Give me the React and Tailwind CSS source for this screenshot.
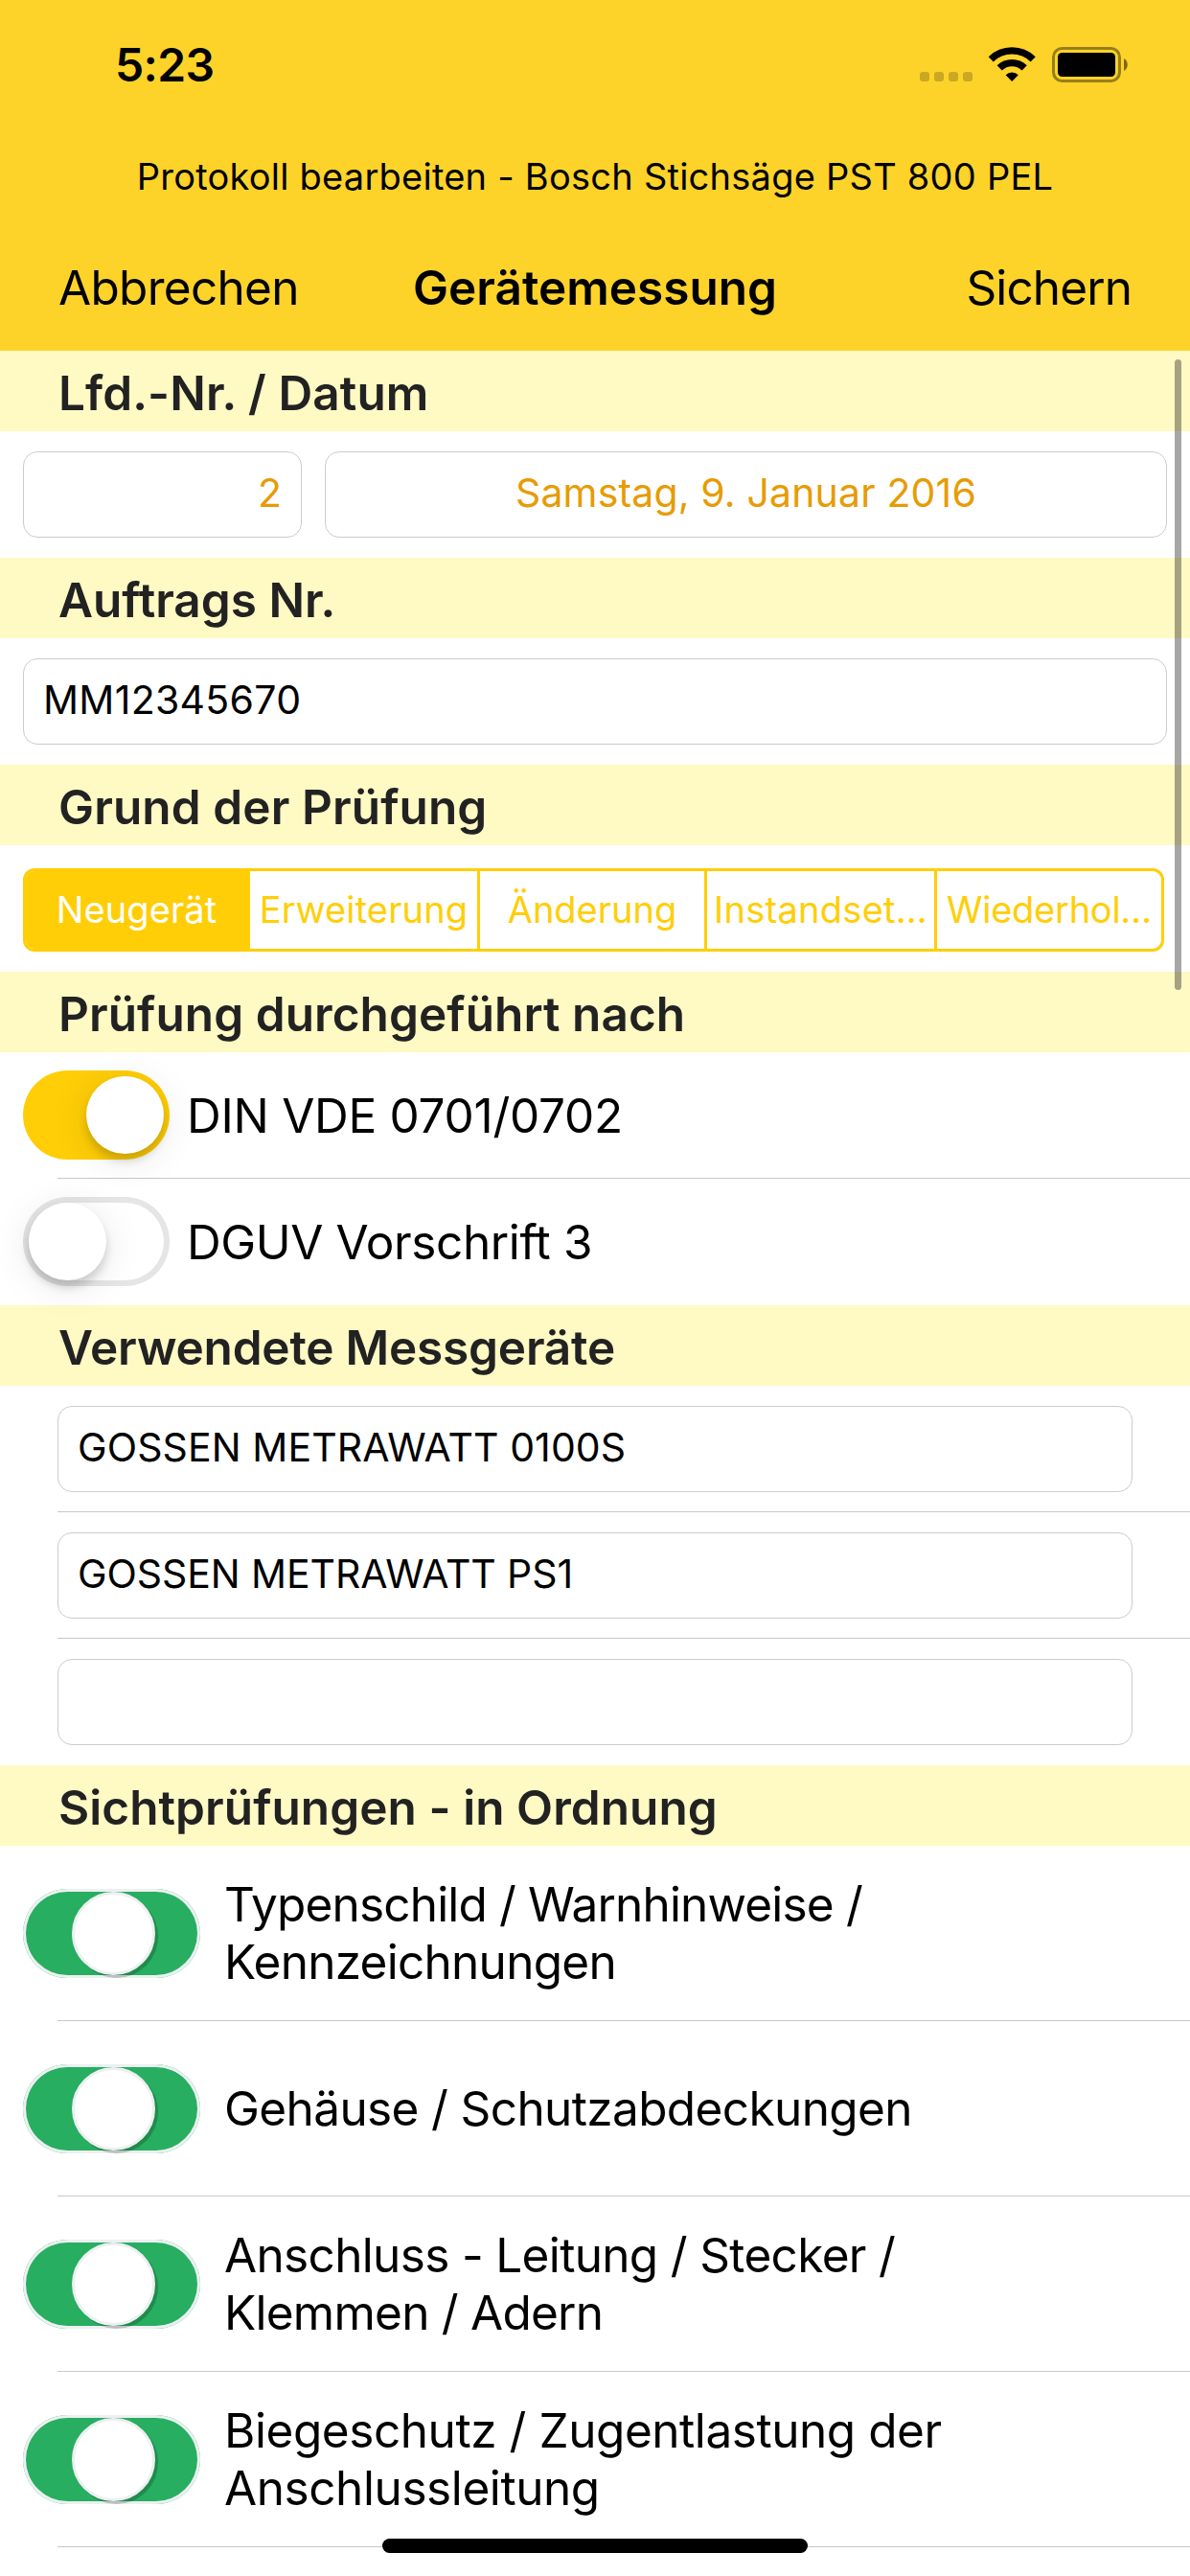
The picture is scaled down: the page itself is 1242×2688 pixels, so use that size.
import React from 'react';

const fields = [
  { text: 'GOSSEN METRAWATT 0100S', tracking: 'tracking-[0.1px]' },
  { text: 'GOSSEN METRAWATT PS1', tracking: 'tracking-[-0.08px]' },
  { text: '', tracking: '' },
];

const segments = [
  { text: 'Neugerät', tracking: 'tracking-[0.1px]' },
  { text: 'Erweiterung', tracking: 'tracking-[0.15px]' },
  { text: 'Änderung', tracking: '' },
  { text: 'Instandset…', tracking: 'tracking-[0.27px]' },
  { text: 'Wiederhol…', tracking: 'tracking-[-0.25px]' },
];

const norms = [
  { text: 'DIN VDE 0701/0702', on: true, tracking: 'tracking-[-0.27px]' },
  { text: 'DGUV Vorschrift 3', on: false, tracking: 'tracking-[-0.4px]' },
];

const checks = [
  [
    { text: 'Typenschild / Warnhinweise /', tracking: 'tracking-[-0.83px]' },
    { text: 'Kennzeichnungen', tracking: 'tracking-[-0.73px]' },
  ],
  [{ text: 'Gehäuse / Schutzabdeckungen', tracking: 'tracking-[-0.62px]' }],
  [
    { text: 'Anschluss - Leitung / Stecker /', tracking: 'tracking-[-0.66px]' },
    { text: 'Klemmen / Adern', tracking: 'tracking-[-0.76px]' },
  ],
  [
    { text: 'Biegeschutz / Zugentlastung der', tracking: 'tracking-[-0.44px]' },
    { text: 'Anschlussleitung', tracking: 'tracking-[-0.42px]' },
  ],
];

const StatusIcons = () => (
  <svg width="217" height="37" viewBox="0 0 217 37">
    {/* Signal */}
    {[0, 15, 30, 45].map((x) => (
      <rect key={x} x={x} y="26" width="10" height="10" rx="3" fill="#000" fillOpacity="0.2" />
    ))}
    {/* Wifi */}
    <g fill="none" stroke="#000" strokeWidth="7.4">
      <path d="M74.2 12.8 A31.5 31.5 0 0 1 118.2 12.8" />
      <path d="M83.2 21.9 A18.6 18.6 0 0 1 109.2 21.9" />
    </g>
    <path d="M96.2 36 L89.6 29.2 A9.4 9.4 0 0 1 102.8 29.2 Z" fill="#000" />
    {/* Battery */}
    <rect x="139.5" y="1.5" width="69" height="34" rx="9" fill="none" stroke="#000" strokeOpacity="0.4" strokeWidth="3" />
    <rect x="144" y="6" width="60" height="25" rx="4.5" fill="#000" />
    <path d="M213 12 C218 14.5 218 22.5 213 25 Z" fill="#000" fillOpacity="0.5" />
  </svg>
);

const Header = () => (
  <header className="bg-[#fdd32a]">
    <div className="flex h-[135px] items-center justify-between pl-[120px] pr-[65px]">
      <span className="text-[48px] font-semibold tracking-[-0.6px]">5:23</span>
      <StatusIcons />
    </div>
    <div className="flex h-[98px] items-center justify-center text-[38px] tracking-[0.24px]">
      Protokoll bearbeiten - Bosch Stichsäge PST 800 PEL
    </div>
    <div className="grid h-[133px] grid-cols-[1fr_auto_1fr] items-center px-[61px] text-[49.5px]">
      <button className="text-left tracking-[-0.7px]">Abbrechen</button>
      <h1 className="font-semibold">Gerätemessung</h1>
      <button className="text-right tracking-[-0.9px]">Sichern</button>
    </div>
  </header>
);

const Section = ({ title, tracking = '' }) => (
  <h2 className={`flex h-[84px] items-center bg-[#fff9c4] pl-[61px] pt-1 text-[49.5px] font-semibold text-[#222] ${tracking}`}>
    {title}
  </h2>
);

const Field = ({ children, className = '' }) => (
  <div className={`flex h-[90px] items-center rounded-[15px] border border-[#ccc] px-5 pb-[5px] text-[41px] ${className}`}>
    {children}
  </div>
);

const Separator = ({ hidden }) => (
  <div className={hidden ? 'h-px' : 'ml-[60px] h-px bg-[#c8c7cc]'} />
);

const Switch = ({ on }) => (
  <div
    className={
      on
        ? 'flex h-[93px] w-[153px] items-center justify-end rounded-full bg-[#ffce07] px-1.5'
        : 'flex h-[93px] w-[153px] items-center rounded-full bg-white px-1.5 shadow-[inset_0_0_0_6px_#e5e5e5]'
    }
  >
    <div className="size-[81px] rounded-full bg-white shadow-[0_6px_40px_rgba(0,0,0,0.1),0_7px_10px_rgba(0,0,0,0.16)]" />
  </div>
);

// Three-state switch, shown in its middle position
const TriSwitch = () => (
  <div className="flex h-[93px] w-[185px] items-center overflow-hidden rounded-full bg-[#27ae60] pl-[51px] shadow-[inset_0_0_0_3px_#ecf0f1]">
    <div className="size-[87px] rounded-full border-[3px] border-[#ecf0f1] bg-white shadow-[3px_3px_0_rgba(0,0,0,0.2)]" />
  </div>
);

const App = () => {
  return (
    <div className="relative h-[2688px] w-[1242px] overflow-hidden bg-white font-['Inter','Liberation_Sans',sans-serif] leading-[60px] text-black">
      <Header />

      <Section title="Lfd.-Nr. / Datum" tracking="tracking-[0.1px]" />
      <div className="flex h-[132px] items-center gap-6 px-6">
        <Field className="w-[291px] justify-end text-[#e69c05]">2</Field>
        <Field className="flex-1 justify-center tracking-[0.15px] text-[#e69c05]">Samstag, 9. Januar 2016</Field>
      </div>

      <Section title="Auftrags Nr." />
      <div className="flex h-[132px] items-center px-6">
        <Field className="flex-1 tracking-[0.3px]">MM12345670</Field>
      </div>

      <Section title="Grund der Prüfung" tracking="tracking-[0.1px]" />
      <div className="flex h-[132px] items-center pl-6 pt-[3px]">
        <div className="grid h-[87px] grid-cols-[234px_240px_237px_240px_234px] overflow-hidden rounded-[12px] border-[3px] border-[#ffce07] text-[38px] text-[#ffce07]">
          {segments.map((segment, index) => (
            <div
              key={segment.text}
              className={`flex items-center justify-center whitespace-nowrap border-r-[3px] border-[#ffce07] pb-px last:border-r-0 ${segment.tracking} ${index === 0 ? 'bg-[#ffce07] text-white' : ''}`}
            >
              {segment.text}
            </div>
          ))}
        </div>
      </div>

      <Section title="Prüfung durchgeführt nach" tracking="tracking-[0.07px]" />
      {norms.map((norm, index) => (
        <div key={norm.text}>
          <div className="flex h-[131px] items-center gap-[18px] pl-6 text-[49.5px]">
            <Switch on={norm.on} />
            <span className={norm.tracking}>{norm.text}</span>
          </div>
          <Separator hidden={index === norms.length - 1} />
        </div>
      ))}

      <Section title="Verwendete Messgeräte" tracking="tracking-[-0.2px]" />
      {fields.map((field, index) => (
        <div key={index}>
          <div className="flex h-[131px] items-center px-[60px] pt-px">
            <Field className={`flex-1 ${field.tracking}`}>{field.text}</Field>
          </div>
          <Separator hidden={index === fields.length - 1} />
        </div>
      ))}

      <Section title="Sichtprüfungen - in Ordnung" tracking="tracking-[0.07px]" />
      {checks.map((lines, index) => (
        <div key={index}>
          <div className="flex h-[182px] items-center gap-[25px] pl-6 pt-px text-[49.5px]">
            <TriSwitch />
            <div className="pb-0.5">
              {lines.map((line) => (
                <p key={line.text} className={line.tracking}>{line.text}</p>
              ))}
            </div>
          </div>
          <Separator />
        </div>
      ))}

      {/* Scroll indicator */}
      <div className="absolute right-[9px] top-[375px] h-[658px] w-[7px] rounded-full bg-black/35" />
      {/* Home indicator */}
      <div className="absolute bottom-6 left-[399px] h-[15px] w-[444px] rounded-full bg-black" />
    </div>
  );
};

export default App;
